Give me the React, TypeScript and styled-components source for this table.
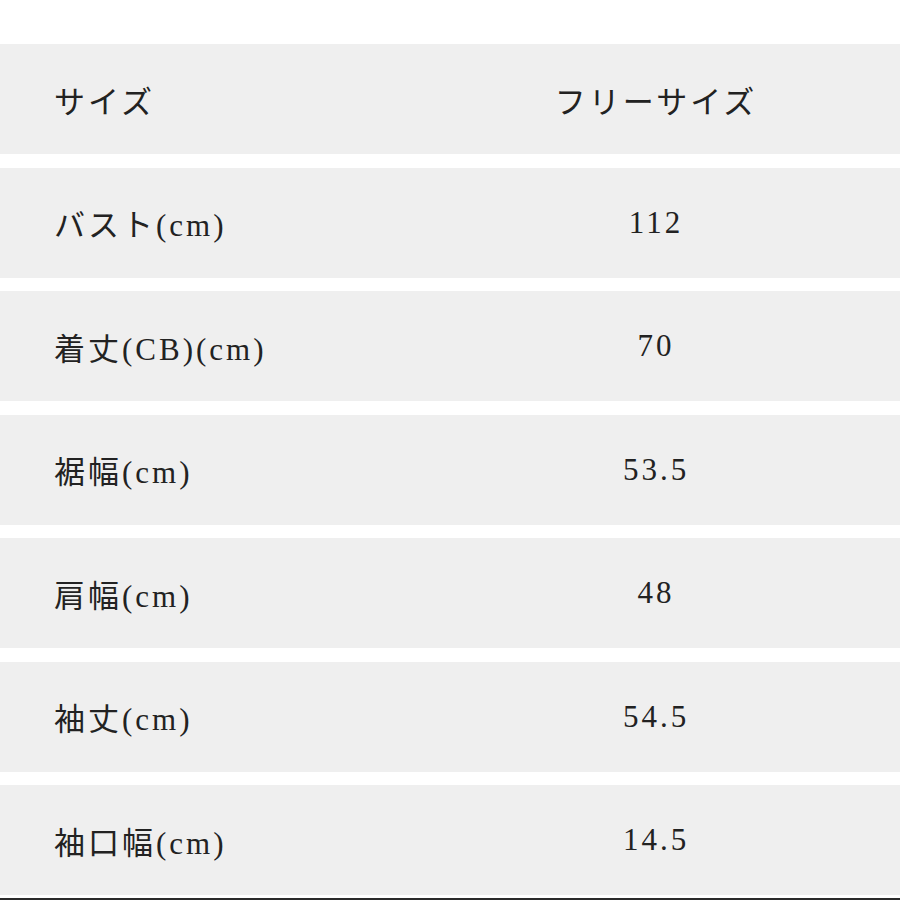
import styled, {createGlobalStyle} from "styled-components";

const GlobalStyle = createGlobalStyle`
  html, body {
    margin: 0;
    padding: 0;
    background: #ffffff;
  }
`;

const Page = styled.div`
  width: 900px;
  height: 900px;
  padding-top: 44px;
  box-sizing: border-box;
  display: flex;
  flex-direction: column;
  gap: 13.5px;
  position: relative;
  overflow: hidden;
  font-family: "Liberation Serif", "Noto Sans CJK JP", serif;
  color: #222222;
`;

const Row = styled.div`
  display: grid;
  grid-template-columns: 412px 1fr;
  align-items: center;
  height: 110px;
  background: #efefef;
`;

const Label = styled.div`
  padding-left: 54px;
  font-size: 31px;
  letter-spacing: 3px;
  white-space: nowrap;
`;

const Value = styled.div`
  text-align: center;
  font-size: 31px;
  letter-spacing: 3px;
  white-space: nowrap;
`;

const BottomLine = styled.div`
  position: absolute;
  left: 0;
  right: 0;
  bottom: 0;
  height: 2px;
  background: #2b2b2b;
`;

const rows: [string, string][] = [
    ['サイズ', 'フリーサイズ'],
    ['バスト(cm)', '112'],
    ['着丈(CB)(cm)', '70'],
    ['裾幅(cm)', '53.5'],
    ['肩幅(cm)', '48'],
    ['袖丈(cm)', '54.5'],
    ['袖口幅(cm)', '14.5'],
];

export default function App() {
    return (
        <>
            <GlobalStyle/>
            <Page>
                {rows.map(([label, value]) => (
                    <Row key={label}>
                        <Label>{label}</Label>
                        <Value>{value}</Value>
                    </Row>
                ))}
                <BottomLine/>
            </Page>
        </>
    )
}
